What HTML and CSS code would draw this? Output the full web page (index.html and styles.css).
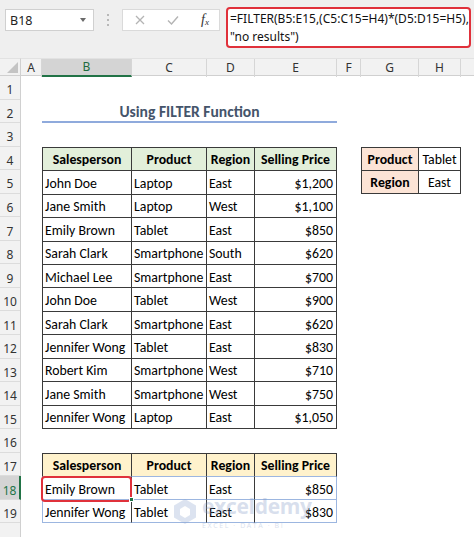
FILE: index.html
```html
<!DOCTYPE html>
<html>
<head>
<meta charset="utf-8">
<link rel="stylesheet" href="styles.css">
</head>
<body>
<div class="fbar">
  <div class="namebox"><span>B18</span><span class="caret"></span></div>
  <div class="grip"><i></i><i></i><i></i></div>
  <div class="btns">
    <svg class="ico-x" width="10" height="10" viewBox="0 0 10 10"><path d="M1 1L9 9M9 1L1 9" stroke="#b4b4b4" stroke-width="1.3" fill="none"/></svg>
    <svg class="ico-ok" width="12" height="10" viewBox="0 0 12 10"><path d="M1 5.5L4.5 9L11 1.5" stroke="#b4b4b4" stroke-width="1.4" fill="none"/></svg>
    <span class="fx">f<sub>x</sub></span>
  </div>
  <div class="formula">=FILTER(B5:E15,(C5:C15=H4)*(D5:D15=H5),<br>"no results")</div>
</div>
<div class="sheet">
  <div class="corner"></div>
  <div class="colheads">
    <div class="ch">A</div>
    <div class="ch sel">B</div>
    <div class="ch">C</div>
    <div class="ch">D</div>
    <div class="ch">E</div>
    <div class="ch">F</div>
    <div class="ch">G</div>
    <div class="ch">H</div>
    <div class="ch last"></div>
  </div>
  <div class="rowheads">
    <div class="rh">1</div><div class="rh">2</div><div class="rh">3</div><div class="rh">4</div>
    <div class="rh">5</div><div class="rh">6</div><div class="rh">7</div><div class="rh">8</div>
    <div class="rh">9</div><div class="rh">10</div><div class="rh">11</div><div class="rh">12</div>
    <div class="rh">13</div><div class="rh">14</div><div class="rh">15</div><div class="rh">16</div>
    <div class="rh">17</div><div class="rh sel">18</div><div class="rh">19</div><div class="rh"></div>
  </div>
  <div class="cells">
    <div class="title">Using FILTER Function</div>

    <table class="tbl main">
      <colgroup><col class="cb"><col class="cc"><col class="cd"><col class="ce"></colgroup>
      <tr><th>Salesperson</th><th>Product</th><th>Region</th><th>Selling Price</th></tr>
      <tr><td>John Doe</td><td>Laptop</td><td>East</td><td class="r">$1,200</td></tr>
      <tr><td>Jane Smith</td><td>Laptop</td><td>West</td><td class="r">$1,100</td></tr>
      <tr><td>Emily Brown</td><td>Tablet</td><td>East</td><td class="r">$850</td></tr>
      <tr><td>Sarah Clark</td><td>Smartphone</td><td>South</td><td class="r">$620</td></tr>
      <tr><td>Michael Lee</td><td>Smartphone</td><td>East</td><td class="r">$700</td></tr>
      <tr><td>John Doe</td><td>Tablet</td><td>West</td><td class="r">$900</td></tr>
      <tr><td>Sarah Clark</td><td>Smartphone</td><td>East</td><td class="r">$620</td></tr>
      <tr><td>Jennifer Wong</td><td>Tablet</td><td>East</td><td class="r">$830</td></tr>
      <tr><td>Robert Kim</td><td>Smartphone</td><td>West</td><td class="r">$710</td></tr>
      <tr><td>Jane Smith</td><td>Smartphone</td><td>West</td><td class="r">$750</td></tr>
      <tr><td>Jennifer Wong</td><td>Laptop</td><td>East</td><td class="r">$1,050</td></tr>
    </table>

    <table class="tbl lookup">
      <colgroup><col class="cg"><col class="chh"></colgroup>
      <tr><th>Product</th><td>Tablet</td></tr>
      <tr><th>Region</th><td>East</td></tr>
    </table>

    <table class="tbl result">
      <colgroup><col class="cb"><col class="cc"><col class="cd"><col class="ce"></colgroup>
      <tr><th>Salesperson</th><th>Product</th><th>Region</th><th>Selling Price</th></tr>
      <tr><td class="picked">Emily Brown<span class="annot"></span><span class="handle"></span></td><td>Tablet</td><td>East</td><td class="r">$850</td></tr>
      <tr><td>Jennifer Wong</td><td>Tablet</td><td>East</td><td class="r">$830</td></tr>
    </table>

    <div class="wm">
      <svg class="wm-logo" width="24" height="27" viewBox="0 0 24 27"><path d="M12 1L23 7.5V19.5L12 26L1 19.5V7.5Z M12 8L7 11V17L12 20L17 17V11Z" fill="#8fa6cf" fill-rule="evenodd"/></svg>
      <div class="wm-text"><span class="wm-name">exceldemy</span><span class="wm-sub">EXCEL · DATA · BI</span></div>
    </div>
  </div>
</div>
</body>
</html>
```
FILE: styles.css
```css
* { box-sizing: border-box; }
html, body { margin: 0; padding: 0; background: #fff; }
body {
  width: 474px;
  height: 537px;
  overflow: hidden;
  font-family: "Carlito", "Lato", "Liberation Sans", sans-serif;
}

/* formula bar */
.fbar {
  height: 58px;
  background: #efefef;
  display: flex;
  align-items: flex-start;
  padding: 7px 0 0 5px;
}
.namebox {
  width: 89px;
  height: 22px;
  margin-top: 2px;
  background: #fff;
  border: 1px solid #d0d0d0;
  display: flex;
  align-items: center;
  justify-content: space-between;
  padding: 0 7px 0 4px;
  font: 12.5px "Noto Sans", sans-serif;
  color: #222;
}
.caret {
  width: 0; height: 0;
  border-left: 3.5px solid transparent;
  border-right: 3.5px solid transparent;
  border-top: 4px solid #6a6a6a;
}
.grip {
  width: 28px;
  display: flex;
  flex-direction: column;
  align-items: center;
  gap: 3px;
  margin-top: 7px;
}
.grip i { display: block; width: 2px; height: 2px; border-radius: 50%; background: #a6a6a6; }
.btns {
  width: 98px;
  height: 22px;
  margin-top: 2px;
  background: #fff;
  border: 1px solid #dadada;
  display: flex;
  align-items: center;
  padding-left: 12px;
}
.ico-ok { margin-left: 22px; }
.fx {
  margin-left: 22px;
  font: italic 14px "Liberation Serif", serif;
  color: #333;
  line-height: 1;
}
.fx sub { font-size: 9px; vertical-align: -1px; }
.formula {
  margin-left: 6px;
  width: 245px;
  height: 41px;
  border: 2px solid #e0313b;
  border-radius: 4px;
  background: #fff;
  padding: 1px 0 0 2px;
  font: 12px/18px "Noto Sans", sans-serif;
  color: #111;
  white-space: nowrap;
  overflow: hidden;
}

/* sheet */
.sheet {
  display: grid;
  grid-template-columns: 21px 453px;
  grid-template-rows: 18px auto;
}
.corner {
  position: relative;
  background: #f2f2f2;
  border-right: 1px solid #d0d0d0;
  border-bottom: 1px solid #d0d0d0;
  border-top: 1px solid #e2e2e2;
}
.corner::after {
  content: "";
  position: absolute;
  right: 2px;
  bottom: 2px;
  width: 0; height: 0;
  border-left: 11px solid transparent;
  border-bottom: 11px solid #c4c4c4;
}
.colheads {
  display: grid;
  grid-template-columns: 21px 90px 75px 48px 82px 24px 58px 42px 1fr;
  background: #f2f2f2;
  border-top: 1px solid #e2e2e2;
  border-bottom: 1px solid #d0d0d0;
}
.ch {
  border-right: 1px solid #d6d6d6;
  text-align: center;
  font: 12px/17px "Noto Sans", sans-serif;
  color: #333;
}
.ch.last { border-right: none; }
.ch.sel {
  background: #d4d4d4;
  color: #1e6b3e;
  border-bottom: 2px solid #217346;
  line-height: 16px;
}
.rowheads {
  display: flex;
  flex-direction: column;
  background: #f2f2f2;
  border-right: 1px solid #d0d0d0;
}
.rh {
  flex: none;
  height: 23.56px;
  border-bottom: 1px solid #dcdcdc;
  display: flex;
  align-items: center;
  justify-content: center;
  font: 12px "Noto Sans", sans-serif;
  color: #333;
  padding-top: 5px;
}
.rh.sel {
  background: #d4d4d4;
  color: #217346;
  border-right: 2px solid #217346;
  margin-right: -1px;
}
.cells {
  position: relative;
  display: grid;
  grid-template-columns: 21px 90px 75px 48px 82px 24px 58px 42px 1fr;
  grid-template-rows: repeat(20, 23.56px);
}

.title {
  grid-row: 2;
  grid-column: 2 / 6;
  border-bottom: 2px solid #8faadc;
  display: flex;
  align-items: center;
  justify-content: center;
  padding-top: 3px;
  font-weight: bold;
  font-size: 15.6px;
  color: #44546a;
}

.tbl {
  border-collapse: separate;
  border-spacing: 0;
  table-layout: fixed;
  width: 100%;
  height: 100%;
  font-size: 13.8px;
  color: #000;
}
.main { grid-row: 4 / 16; grid-column: 2 / 6; }
.lookup { grid-row: 4 / 6; grid-column: 7 / 9; }
.result { grid-row: 17 / 20; grid-column: 2 / 6; }

.cb { width: 90px; }
.cc { width: 75px; }
.cd { width: 48px; }
.ce { width: 82px; }
.cg { width: 58px; }
.chh { width: 42px; }

.tbl th, .tbl td {
  border-right: 1px solid #3a3a3a;
  border-bottom: 1px solid #3a3a3a;
  padding: 2px 2px 0 2px;
  white-space: nowrap;
  text-align: left;
  vertical-align: middle;
  font-weight: normal;
}
.tbl tr:first-child > * { border-top: 1px solid #3a3a3a; }
.tbl tr > :first-child { border-left: 1px solid #3a3a3a; }
.tbl th { font-weight: bold; text-align: center; }
.tbl .r { text-align: right; padding-right: 3px; }

.main th { background: #e2efda; }
.lookup th { background: #fce4d6; }
.lookup td { text-align: center; }
.result th { background: #fff2cc; border-bottom-color: #9cb6e0; }
.result td { border-bottom-color: #9cb6e0; }
.result td:first-child { border-left-color: #9cb6e0; }
.result td:last-child { border-right-color: #9cb6e0; }

.picked { position: relative; }
.annot {
  position: absolute;
  left: -2px;
  top: -1px;
  right: -1px;
  bottom: -3px;
  border: 2px solid #e0313b;
  border-radius: 4px;
}
.handle {
  position: absolute;
  right: -3px;
  bottom: -3px;
  width: 5px;
  height: 5px;
  background: #217346;
  border: 1px solid #fff;
}

/* watermark */
.wm {
  position: absolute;
  left: 152px;
  top: 416px;
  display: flex;
  align-items: center;
  gap: 5px;
  opacity: 0.3;
  pointer-events: none;
}
.wm-text { display: flex; flex-direction: column; line-height: 1; }
.wm-name {
  font: bold 21px "Open Sans", sans-serif;
  color: #7f97c4;
  letter-spacing: -0.3px;
}
.wm-sub {
  font: 7px "Open Sans", sans-serif;
  color: #7f97c4;
  letter-spacing: 1.6px;
  margin-top: 1px;
}
```
